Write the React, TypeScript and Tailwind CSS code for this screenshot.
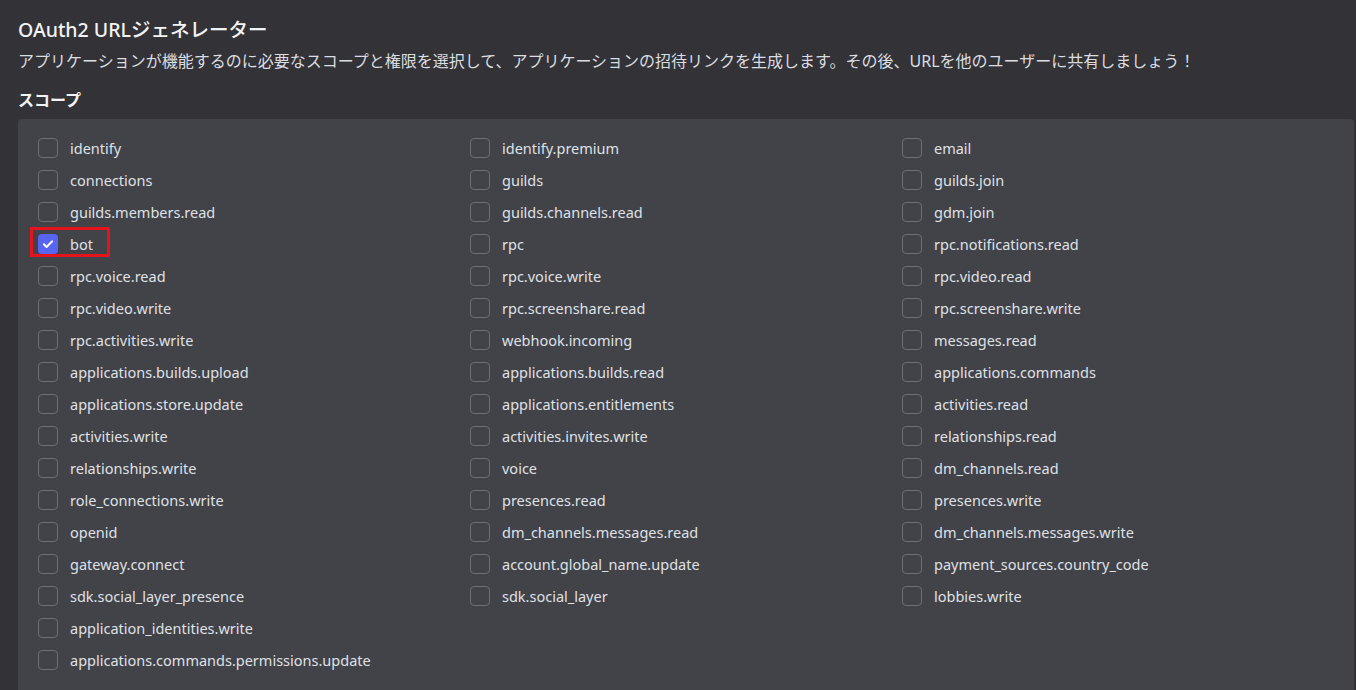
import React from 'react';

const scopes: string[][] = [
  ['identify', 'identify.premium', 'email'],
  ['connections', 'guilds', 'guilds.join'],
  ['guilds.members.read', 'guilds.channels.read', 'gdm.join'],
  ['bot', 'rpc', 'rpc.notifications.read'],
  ['rpc.voice.read', 'rpc.voice.write', 'rpc.video.read'],
  ['rpc.video.write', 'rpc.screenshare.read', 'rpc.screenshare.write'],
  ['rpc.activities.write', 'webhook.incoming', 'messages.read'],
  ['applications.builds.upload', 'applications.builds.read', 'applications.commands'],
  ['applications.store.update', 'applications.entitlements', 'activities.read'],
  ['activities.write', 'activities.invites.write', 'relationships.read'],
  ['relationships.write', 'voice', 'dm_channels.read'],
  ['role_connections.write', 'presences.read', 'presences.write'],
  ['openid', 'dm_channels.messages.read', 'dm_channels.messages.write'],
  ['gateway.connect', 'account.global_name.update', 'payment_sources.country_code'],
  ['sdk.social_layer_presence', 'sdk.social_layer', 'lobbies.write'],
  ['application_identities.write', '', ''],
  ['applications.commands.permissions.update', '', ''],
];

interface ScopeItemProps {
  name: string;
  checked?: boolean;
}

const ScopeItem: React.FC<ScopeItemProps> = ({ name, checked }) => {
  const box = checked ? (
    <span className="flex h-5 w-5 items-center justify-center rounded-[4px] bg-[#5865f2]">
      <svg width="14" height="14" viewBox="0 0 24 24" fill="none">
        <path d="M5 12.5l4.5 4.5L19 7.5" stroke="#fff" strokeWidth="3.6" strokeLinecap="round" strokeLinejoin="round" />
      </svg>
    </span>
  ) : (
    <span className="h-5 w-5 rounded-[4px] border border-[#6d6f78]" />
  );

  return (
    <div className="relative flex h-6 items-center gap-3">
      {checked && (
        <span className="pointer-events-none absolute -left-[8px] -top-[5px] h-[30px] w-[80px] border-[3px] border-[#e5141c]" />
      )}
      {box}
      <span className="text-[14.5px] leading-6 text-[#dfe1e5]">{name}</span>
    </div>
  );
};

export default function App() {
  return (
    <div
      className="h-[690px] w-[1356px] overflow-hidden bg-[#323237] pl-[18px] pr-[2px] pt-[18px]"
      style={{ fontFamily: '"Noto Sans", "Noto Sans CJK JP", sans-serif' }}
    >
      <h1 className="text-[19.5px] font-medium leading-6 text-[#f2f3f5]">OAuth2 URLジェネレーター</h1>
      <p className="mt-[9px] text-[16px] leading-5 text-[#dbdee1]">
        アプリケーションが機能するのに必要なスコープと権限を選択して、アプリケーションの招待リンクを生成します。その後、URLを他のユーザーに共有しましょう！
      </p>
      <h2 className="mt-[17px] text-[16px] font-semibold leading-6 text-[#f2f3f5]">スコープ</h2>
      <div className="mt-[7px] rounded-[4px] bg-[#424249] px-5 pb-10 pt-[17px]">
        <div className="grid grid-cols-3 gap-y-2">
          {scopes.map((row, i) =>
            row.map((name, j) =>
              name ? <ScopeItem key={`${i}-${j}`} name={name} checked={name === 'bot'} /> : <div key={`${i}-${j}`} />
            )
          )}
        </div>
      </div>
    </div>
  );
}
